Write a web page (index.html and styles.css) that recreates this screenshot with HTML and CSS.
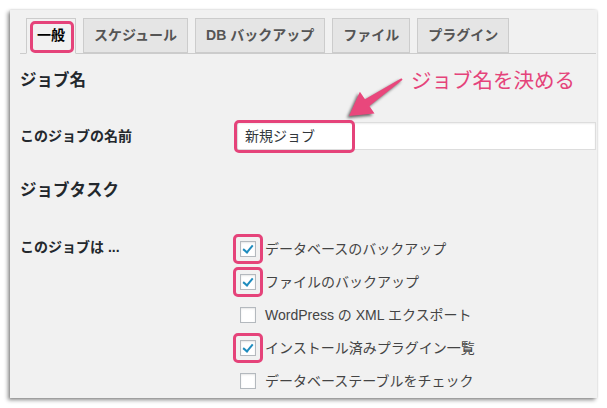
FILE: index.html
```html
<!DOCTYPE html>
<html lang="ja">
<head>
<meta charset="utf-8">
<link rel="stylesheet" href="styles.css">
</head>
<body>
<div class="panel">
  <div class="tabs">
    <span class="tab active">一般<span class="mark mark-tab"></span></span>
    <span class="tab">スケジュール</span>
    <span class="tab">DB バックアップ</span>
    <span class="tab">ファイル</span>
    <span class="tab">プラグイン</span>
  </div>
  <h3 class="heading h-first">ジョブ名</h3>
  <div class="row row-name">
    <div class="label">このジョブの名前</div>
    <div class="value">
      <div class="input">新規ジョブ<span class="mark mark-input"></span></div>
    </div>
  </div>
  <h3 class="heading h-second">ジョブタスク</h3>
  <div class="row row-tasks">
    <div class="label label-tasks">このジョブは ...</div>
    <div class="value list">
      <div class="item"><span class="cb checked"><span class="mark mark-cb"></span></span><span class="txt">データベースのバックアップ</span></div>
      <div class="item"><span class="cb checked"><span class="mark mark-cb"></span></span><span class="txt">ファイルのバックアップ</span></div>
      <div class="item"><span class="cb"></span><span class="txt">WordPress の XML エクスポート</span></div>
      <div class="item"><span class="cb checked"><span class="mark mark-cb"></span></span><span class="txt">インストール済みプラグイン一覧</span></div>
      <div class="item"><span class="cb"></span><span class="txt">データベーステーブルをチェック</span></div>
    </div>
  </div>
</div>
<div class="note">ジョブ名を決める</div>
<svg class="arrow" width="607" height="408" viewBox="0 0 607 408">
  <polygon points="349,116 374.5,113.4 369.4,105.9 402.6,79.8 401.4,78.2 365,99.3 359.9,91.8" fill="#e9477c"/>
</svg>
</body>
</html>
```
FILE: styles.css
```css
html, body {
  margin: 0;
  padding: 0;
  background: #ffffff;
}
body {
  position: relative;
  width: 607px;
  height: 408px;
  overflow: hidden;
  font-family: "Liberation Sans", "Noto Sans CJK JP", sans-serif;
  color: #23282d;
}
.panel {
  margin: 10px 0 0 10px;
  width: 587px;
  height: 388px;
  background: #f1f1f1;
  box-shadow: -2px 2px 4px rgba(0, 0, 0, 0.45), 0 0 2px rgba(0, 0, 0, 0.15);
  box-sizing: border-box;
  padding: 8px 1px 0 10px;
  overflow: hidden;
}
.tabs {
  display: flex;
  gap: 7px;
  padding-left: 6px;
  border-bottom: 1px solid #cccccc;
  height: 35px;
}
.tab {
  position: relative;
  display: block;
  height: 35px;
  box-sizing: border-box;
  padding: 0 10px;
  line-height: 33px;
  font-size: 14px;
  font-weight: 700;
  color: #555555;
  background: #e5e5e5;
  border: 1px solid #cccccc;
  white-space: nowrap;
}
.tab.active {
  background: #f1f1f1;
  border-bottom-color: #f1f1f1;
  height: 36px;
  color: #000000;
}
.mark {
  position: absolute;
  border: 3px solid #e5437a;
  border-radius: 5px;
  box-sizing: border-box;
  pointer-events: none;
}
.mark-tab {
  left: 3px;
  top: 2px;
  width: 44px;
  height: 32px;
}
.heading {
  margin: 0;
  font-size: 16.5px;
  line-height: 24px;
  font-weight: 700;
  color: #23282d;
}
.h-first { margin-top: 14px; }
.h-second { margin-top: 28px; }
.row {
  display: grid;
  grid-template-columns: 217px 1fr;
}
.row-name {
  margin-top: 30px;
  align-items: center;
}
.label {
  font-size: 14px;
  font-weight: 700;
  line-height: 28px;
}
.input {
  position: relative;
  height: 28px;
  box-sizing: border-box;
  border: 1px solid #dddddd;
  background: #ffffff;
  box-shadow: inset 0 1px 2px rgba(0, 0, 0, 0.07);
  padding-left: 7px;
  font-size: 14px;
  line-height: 26px;
  color: #32373c;
}
.mark-input {
  left: -4px;
  top: -3px;
  width: 121px;
  height: 33px;
}
.row-tasks {
  margin-top: 30px;
}
.label-tasks {
  line-height: 30px;
}
.list {
  display: flex;
  flex-direction: column;
}
.item {
  display: flex;
  align-items: center;
  height: 33px;
  font-size: 14px;
  color: #444444;
}
.cb {
  position: relative;
  width: 16px;
  height: 16px;
  box-sizing: border-box;
  margin-left: 3px;
  margin-right: 9px;
  border: 1px solid #b4b9be;
  background: #ffffff;
  box-shadow: inset 0 1px 2px rgba(0, 0, 0, 0.1);
  flex: none;
}
.cb.checked::after {
  content: "";
  position: absolute;
  left: 4px;
  top: 1px;
  width: 4px;
  height: 8px;
  border-right: 2.5px solid #1e8cbe;
  border-bottom: 2.5px solid #1e8cbe;
  transform: rotate(40deg);
}
.mark-cb {
  left: -8px;
  top: -8px;
  width: 30px;
  height: 30px;
}
.txt {
  white-space: nowrap;
  line-height: 20px;
}
.note {
  position: absolute;
  left: 411px;
  top: 67px;
  font-size: 20.5px;
  line-height: 28px;
  color: #e5437a;
  white-space: nowrap;
}
.arrow {
  position: absolute;
  left: 0;
  top: 0;
  pointer-events: none;
  filter: drop-shadow(-2px 2px 1.5px rgba(0, 0, 0, 0.6));
}
```
